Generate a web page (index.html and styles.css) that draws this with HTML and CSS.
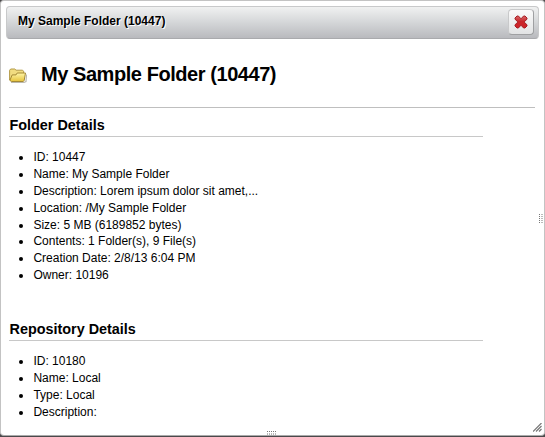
FILE: index.html
```html
<!DOCTYPE html>
<html lang="en">
<head>
<meta charset="utf-8">
<title>My Sample Folder (10447)</title>
<link rel="stylesheet" href="styles.css">
</head>
<body>
<div class="dialog">
  <header class="titlebar">
    <span class="title">My Sample Folder (10447)</span>
    <button class="close" aria-label="Close">
      <svg width="14" height="14" viewBox="0 0 14 14">
        <defs><linearGradient id="red" x1="0" y1="0" x2="0" y2="1"><stop offset="0" stop-color="#d9696a"/><stop offset=".45" stop-color="#c8262b"/><stop offset="1" stop-color="#d12228"/></linearGradient></defs>
        <path d="M1 3 3 1H4.400L7 3.800 9.600 1H11L13 3V4.200L10.100 7 13 9.800V11L11 13H9.600L7 10.200 4.400 13H3L1 11V9.800L3.900 7 1 4.200Z" fill="url(#red)" stroke="#a51e24" stroke-width="1" stroke-linejoin="round"/>
      </svg>
    </button>
  </header>
  <main class="content">
    <div class="heading">
      <svg class="folder" width="18" height="16" viewBox="0 0 18 16">
        <defs><linearGradient id="gold" x1="0" y1="0" x2="0" y2="1"><stop offset="0" stop-color="#fff6a8"/><stop offset="1" stop-color="#e6c33d"/></linearGradient></defs>
        <path d="M2 14.500H15L17 13.500 17.600 6.500" fill="none" stroke="#bbb9b0" stroke-width="1.200"/>
        <path d="M.6 12V2.200L1.700 1H5.800L7 2.200H13.600L14.600 3.200V12Z" fill="#f1dc80" stroke="#b39a48"/>
        <path d="M2.300 13.500.9 12.300 3.200 6.900H7L8.200 5H16.500L15.200 12.400 14.300 13.500Z" fill="url(#gold)" stroke="#a58a35" stroke-linejoin="round"/>
      </svg>
      <h1>My Sample Folder (10447)</h1>
    </div>
    <section class="details">
      <h2>Folder Details</h2>
      <ul>
        <li>ID: 10447</li>
        <li>Name: My Sample Folder</li>
        <li>Description: Lorem ipsum dolor sit amet,...</li>
        <li>Location: /My Sample Folder</li>
        <li>Size: 5 MB (6189852 bytes)</li>
        <li>Contents: 1 Folder(s), 9 File(s)</li>
        <li>Creation Date: 2/8/13 6:04 PM</li>
        <li>Owner: 10196</li>
      </ul>
    </section>
    <section class="details">
      <h2>Repository Details</h2>
      <ul>
        <li>ID: 10180</li>
        <li>Name: Local</li>
        <li>Type: Local</li>
        <li>Description:</li>
      </ul>
    </section>
  </main>
  <svg class="grip grip-right" width="4" height="10" viewBox="0 0 4 10"><path d="M.5 0V10M3 0V10" stroke="#777" stroke-dasharray="1 1" fill="none"/></svg>
  <svg class="grip grip-bottom" width="10" height="4" viewBox="0 0 10 4"><path d="M0 .5H10M0 3H10" stroke="#777" stroke-dasharray="1 1" fill="none"/></svg>
  <svg class="grip grip-corner" width="9" height="9" viewBox="0 0 9 9"><path d="M0 8.500 8.500 0M3 8.500 8.500 3M6 8.500 8.500 6" stroke="#777" stroke-width="1.200" fill="none"/></svg>
</div>
</body>
</html>
```

FILE: styles.css
```css
* { box-sizing: border-box; }
body {
  margin: 0;
  height: 437px;
  overflow: hidden;
  background: #4b494b;
  font-family: "Liberation Sans", Arial, sans-serif;
  font-size: 12px;
  color: #000;
}
.dialog {
  position: relative;
  height: 436px;
  padding: 5px;
  border: 1px solid #c3c3c3;
  border-bottom-color: #aaa;
  border-radius: 4px;
  background: #fff;
}
.titlebar {
  display: flex;
  align-items: flex-start;
  justify-content: space-between;
  height: 33px;
  padding: 2px 4px 0 11px;
  border: 1px solid #c8c9ca;
  border-bottom-color: #a9aaad;
  border-radius: 4px;
  background: linear-gradient(#f0f1f1, #d4d6d8 50%, #b9babe);
}
.title {
  margin-top: 5px;
  font-weight: bold;
  line-height: 14px;
  text-shadow: 1px 1px #fff;
}
.close {
  display: flex;
  align-items: center;
  justify-content: center;
  width: 26px;
  height: 26px;
  padding: 0;
  border: 1px solid #c8c9ca;
  border-right-color: #9fa0a2;
  border-bottom-color: #9fa0a2;
  border-radius: 4px;
  background: linear-gradient(#fafafa, #e2e3e4);
}
.content { padding: 0 4px 0 3px; }
.heading {
  display: flex;
  align-items: center;
  height: 69px;
  padding-top: 4px;
  border-bottom: 1px solid #bfbfbf;
}
.folder { margin: 2px 14px 0 0; }
h1 {
  margin: 0 0 2px;
  font-size: 20px;
  letter-spacing: -0.44px;
  line-height: 24px;
}
.details { width: 474px; }
h2 {
  height: 29px;
  margin: 0;
  padding: 9px 0 0 0.5px;
  border-bottom: 1px solid #c8c8c8;
  font-size: 14.4px;
  line-height: 17px;
}
ul {
  margin: 0;
  padding: 12.1px 0 0 24.4px;
  line-height: 16.86px;
}
.details:not(:last-child) ul { height: 175px; }
.grip { position: absolute; }
.grip-right { top: 213px; left: 538px; }
.grip-bottom { top: 430px; left: 266px; }
.grip-corner { top: 422px; left: 532px; }
```
